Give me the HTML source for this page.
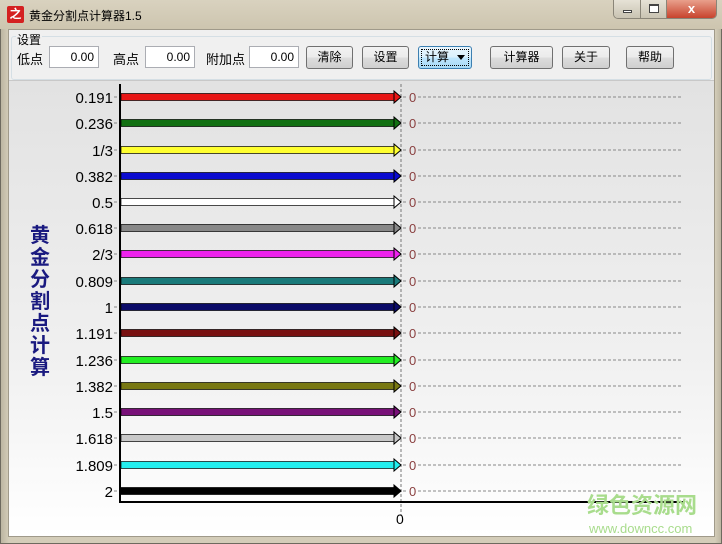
<!DOCTYPE html>
<html><head><meta charset="utf-8"><style>
*{margin:0;padding:0;box-sizing:border-box}
body{width:722px;height:544px;overflow:hidden;background:#cfc9b9;font-family:"Liberation Sans","Noto Sans CJK SC",sans-serif;position:relative}
.title{position:absolute;left:0;top:0;width:722px;height:29px;background:linear-gradient(#d9d2bf,#cdc5af);}
.frame{position:absolute;left:0;top:0;width:722px;height:544px;border:1px solid #6e6a5f;border-radius:6px 6px 0 0;background:linear-gradient(90deg,#bdb6a2,#d4cdb9 8px,#d4cdb9 714px,#bdb6a2)}
.client{position:absolute;left:8px;top:29px;width:707px;height:508px;background:#f0f0f0;border:1px solid #a09a8a}
.t{position:absolute;font-size:12px;color:#000;white-space:nowrap}
.inp{position:absolute;height:22px;background:#fff;border:1px solid #abadb3;font-size:12px;text-align:right;padding:3px 4px 0 0}
.btn{position:absolute;height:23px;border:1px solid #707070;border-radius:3px;background:linear-gradient(#f2f2f2,#ebebeb 50%,#dddddd 51%,#cfcfcf);font-size:12px;text-align:center;line-height:21px}
</style></head><body>
<div class="frame"></div>
<div class="title"></div>
<div style="position:absolute;left:7px;top:6px;width:17px;height:17px;background:#d42020;border-radius:2px;color:#fff;font-size:12px;line-height:17px;text-align:center;font-weight:bold">之</div>
<div class="t" style="left:29px;top:7px;font-size:12px">黄金分割点计算器1.5</div>
<div style="position:absolute;left:613px;top:0;width:104px;height:19px;border:1px solid #8a8578;border-top:none;border-radius:0 0 5px 5px;overflow:hidden;display:flex">
<div style="width:27px;background:linear-gradient(#e6e2d6,#c9c3b2);border-right:1px solid #8a8578;position:relative"><div style="position:absolute;left:9px;top:10px;width:9px;height:3px;border:1px solid #444;background:#fff"></div></div>
<div style="width:26px;background:linear-gradient(#e6e2d6,#c9c3b2);border-right:1px solid #8a8578;position:relative"><div style="position:absolute;left:8px;top:4px;width:10px;height:9px;border:1px solid #444;border-top-width:2px;background:#fff"></div></div>
<div style="flex:1;background:linear-gradient(#e9a08c,#c7432d);color:#fff;font-weight:bold;font-size:13px;text-align:center;line-height:18px">x</div>
</div>
<div class="client">
 <div style="position:absolute;left:2px;top:6px;width:701px;height:44px;border:1px solid #d5dfe5;border-radius:3px"></div>
 <div class="t" style="left:7px;top:1px;background:#f0f0f0;padding:0 1px">设置</div>
 <div class="t" style="left:8px;top:19px;font-size:13px">低点</div>
 <div class="inp" style="left:40px;top:16px;width:50px">0.00</div>
 <div class="t" style="left:104px;top:19px;font-size:13px">高点</div>
 <div class="inp" style="left:136px;top:16px;width:50px">0.00</div>
 <div class="t" style="left:197px;top:19px;font-size:13px">附加点</div>
 <div class="inp" style="left:240px;top:16px;width:50px">0.00</div>
 <div class="btn" style="left:297px;top:16px;width:47px">清除</div>
 <div class="btn" style="left:353px;top:16px;width:47px">设置</div>
 <div class="btn" style="left:409px;top:16px;width:54px;border-color:#3c7fb1;background:linear-gradient(#eaf6fd,#d9f0fc 50%,#bee6fd 51%,#a7d9f5)"><div style="position:absolute;left:2px;top:2px;right:2px;bottom:2px;border:1px dotted #000"></div><span style="position:absolute;left:6px;top:0">计算</span><span style="position:absolute;left:38px;top:8px;border:4px solid transparent;border-top:5px solid #000"></span></div>
 <div class="btn" style="left:481px;top:16px;width:63px">计算器</div>
 <div class="btn" style="left:553px;top:16px;width:48px">关于</div>
 <div class="btn" style="left:617px;top:16px;width:48px">帮助</div>
 <div style="position:absolute;left:0;top:50px;width:705px;height:456px;background:linear-gradient(#e2e2e2,#f0f0f0 60%,#ffffff);border-top:1px solid #c8c8c8"></div>
</div>
<svg style="position:absolute;left:0;top:0" width="722" height="544" font-family="Liberation Sans, sans-serif">
<text x="40" y="242" font-size="20" fill="#1a1a80" font-weight="bold" text-anchor="middle" font-family="Noto Sans CJK SC, sans-serif"><tspan x="40" dy="0">黄</tspan><tspan x="40" dy="22">金</tspan><tspan x="40" dy="22">分</tspan><tspan x="40" dy="22">割</tspan><tspan x="40" dy="22">点</tspan><tspan x="40" dy="22">计</tspan><tspan x="40" dy="22">算</tspan></text>
<line x1="401" y1="84" x2="401" y2="515" stroke="#777" stroke-dasharray="3,2"/>
<g id="rows" font-size="15" text-anchor="end">
<g transform="translate(0,97)"><text x="113" y="6">0.191</text><rect x="121" y="-3.5" width="273" height="7" fill="#e81515" stroke="#000" stroke-width=".7"/><polygon points="394,-6 401,0 394,6" fill="#e81515" stroke="#000"/></g>
<g transform="translate(0,123)"><text x="113" y="6">0.236</text><rect x="121" y="-3.5" width="273" height="7" fill="#127012" stroke="#000" stroke-width=".7"/><polygon points="394,-6 401,0 394,6" fill="#127012" stroke="#000"/></g>
<g transform="translate(0,150)"><text x="113" y="6">1/3</text><rect x="121" y="-3.5" width="273" height="7" fill="#ffff30" stroke="#000" stroke-width=".7"/><polygon points="394,-6 401,0 394,6" fill="#ffff30" stroke="#000"/></g>
<g transform="translate(0,176)"><text x="113" y="6">0.382</text><rect x="121" y="-3.5" width="273" height="7" fill="#0b0bd0" stroke="#000" stroke-width=".7"/><polygon points="394,-6 401,0 394,6" fill="#0b0bd0" stroke="#000"/></g>
<g transform="translate(0,202)"><text x="113" y="6">0.5</text><rect x="121" y="-3.5" width="273" height="7" fill="#fff" stroke="#000" stroke-width=".7"/><polygon points="394,-6 401,0 394,6" fill="#fff" stroke="#000"/></g>
<g transform="translate(0,228)"><text x="113" y="6">0.618</text><rect x="121" y="-3.5" width="273" height="7" fill="#888" stroke="#000" stroke-width=".7"/><polygon points="394,-6 401,0 394,6" fill="#888" stroke="#000"/></g>
<g transform="translate(0,254)"><text x="113" y="6">2/3</text><rect x="121" y="-3.5" width="273" height="7" fill="#ee22ee" stroke="#000" stroke-width=".7"/><polygon points="394,-6 401,0 394,6" fill="#ee22ee" stroke="#000"/></g>
<g transform="translate(0,281)"><text x="113" y="6">0.809</text><rect x="121" y="-3.5" width="273" height="7" fill="#1a7a7a" stroke="#000" stroke-width=".7"/><polygon points="394,-6 401,0 394,6" fill="#1a7a7a" stroke="#000"/></g>
<g transform="translate(0,307)"><text x="113" y="6">1</text><rect x="121" y="-3.5" width="273" height="7" fill="#0b0b68" stroke="#000" stroke-width=".7"/><polygon points="394,-6 401,0 394,6" fill="#0b0b68" stroke="#000"/></g>
<g transform="translate(0,333)"><text x="113" y="6">1.191</text><rect x="121" y="-3.5" width="273" height="7" fill="#781010" stroke="#000" stroke-width=".7"/><polygon points="394,-6 401,0 394,6" fill="#781010" stroke="#000"/></g>
<g transform="translate(0,360)"><text x="113" y="6">1.236</text><rect x="121" y="-3.5" width="273" height="7" fill="#22ee22" stroke="#000" stroke-width=".7"/><polygon points="394,-6 401,0 394,6" fill="#22ee22" stroke="#000"/></g>
<g transform="translate(0,386)"><text x="113" y="6">1.382</text><rect x="121" y="-3.5" width="273" height="7" fill="#787812" stroke="#000" stroke-width=".7"/><polygon points="394,-6 401,0 394,6" fill="#787812" stroke="#000"/></g>
<g transform="translate(0,412)"><text x="113" y="6">1.5</text><rect x="121" y="-3.5" width="273" height="7" fill="#781078" stroke="#000" stroke-width=".7"/><polygon points="394,-6 401,0 394,6" fill="#781078" stroke="#000"/></g>
<g transform="translate(0,438)"><text x="113" y="6">1.618</text><rect x="121" y="-3.5" width="273" height="7" fill="#c8c8c8" stroke="#000" stroke-width=".7"/><polygon points="394,-6 401,0 394,6" fill="#c8c8c8" stroke="#000"/></g>
<g transform="translate(0,465)"><text x="113" y="6">1.809</text><rect x="121" y="-3.5" width="273" height="7" fill="#22eeee" stroke="#000" stroke-width=".7"/><polygon points="394,-6 401,0 394,6" fill="#22eeee" stroke="#000"/></g>
<g transform="translate(0,491)"><text x="113" y="6">2</text><rect x="121" y="-3.5" width="273" height="7" fill="#000" stroke="#000" stroke-width=".7"/><polygon points="394,-6 401,0 394,6" fill="#000" stroke="#000"/></g>
</g>
<g stroke="#888" stroke-dasharray="3,2">
<path d="M114 97h6M114 123h6M114 150h6M114 176h6M114 202h6M114 228h6M114 254h6M114 281h6M114 307h6M114 333h6M114 360h6M114 386h6M114 412h6M114 438h6M114 465h6M114 491h6"/>
<path d="M403 97h5M403 123h5M403 150h5M403 176h5M403 202h5M403 228h5M403 254h5M403 281h5M403 307h5M403 333h5M403 360h5M403 386h5M403 412h5M403 438h5M403 465h5M403 491h5"/>
<path d="M418 97h264M418 123h264M418 150h264M418 176h264M418 202h264M418 228h264M418 254h264M418 281h264M418 307h264M418 333h264M418 360h264M418 386h264M418 412h264M418 438h264M418 465h264M418 491h264"/>
</g>
<g font-size="13" fill="#8a4040">
<text x="409" y="102">0</text><text x="409" y="128">0</text><text x="409" y="155">0</text><text x="409" y="181">0</text><text x="409" y="207">0</text><text x="409" y="233">0</text><text x="409" y="259">0</text><text x="409" y="286">0</text><text x="409" y="312">0</text><text x="409" y="338">0</text><text x="409" y="365">0</text><text x="409" y="391">0</text><text x="409" y="417">0</text><text x="409" y="443">0</text><text x="409" y="470">0</text><text x="409" y="496">0</text>
</g>
<line x1="120" y1="84" x2="120" y2="503" stroke="#000" stroke-width="2"/>
<line x1="119" y1="502" x2="683" y2="502" stroke="#000" stroke-width="2"/>
<text x="396" y="524" font-size="14">0</text>
<text x="587" y="513" font-size="22" fill="#a8dc8c" font-weight="bold" font-family="Noto Sans CJK SC, sans-serif">绿色资源网</text>
<text x="589" y="533" font-size="13" fill="#a8dc8c">www.downcc.com</text>
</svg>
</body></html>
